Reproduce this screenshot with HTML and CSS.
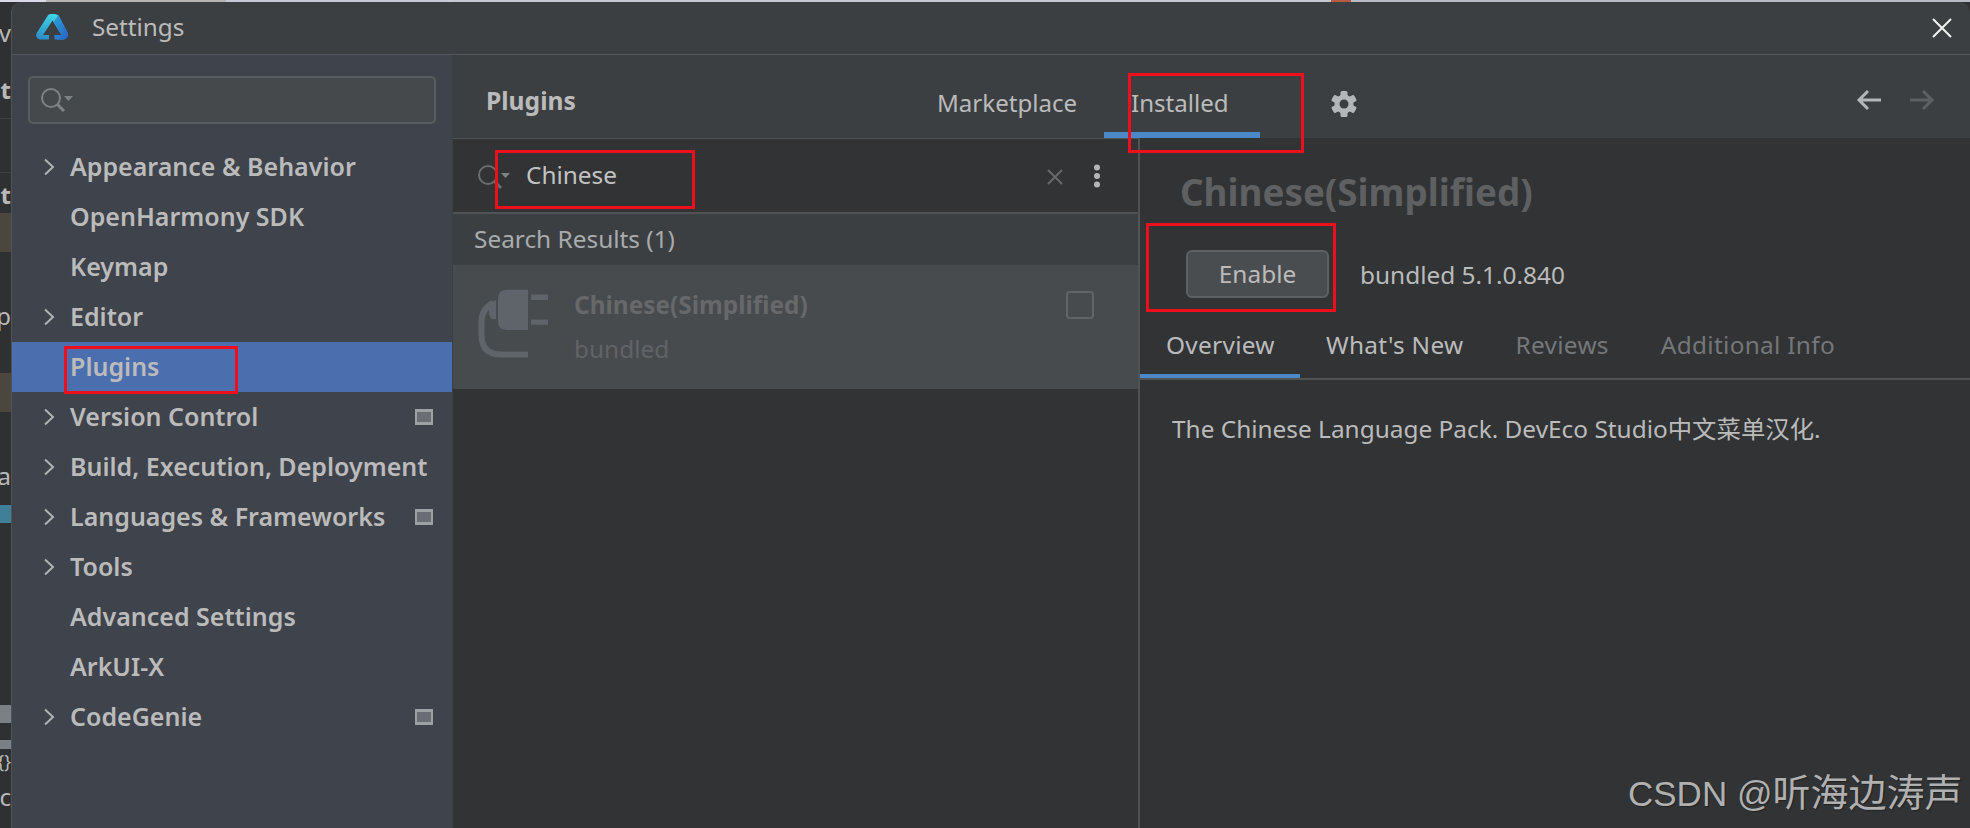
FILE: index.html
```html
<!DOCTYPE html>
<html lang="en">
<head>
<meta charset="utf-8">
<title>Settings</title>
<link rel="stylesheet" href="styles.css">
</head>
<body>
<div class="desktop-top"><span class="dt a"></span><span class="dt b"></span><span class="dt c"></span><span class="dt d"></span><span class="dt e"></span><span class="dt f"></span></div>
<div class="stage">
  <div class="behind">
    <div class="frag s16"></div>
    <div class="frag t">ev</div>
    <div class="frag s27"></div>
    <div class="frag t strong">nt</div>
    <div class="frag s13"></div>
    <div class="frag lined"></div>
    <div class="frag s7"></div>
    <div class="frag t strong">nt</div>
    <div class="frag s3"></div>
    <div class="frag brown"></div>
    <div class="frag s49"></div>
    <div class="frag t">p</div>
    <div class="frag s42"></div>
    <div class="frag brown"></div>
    <div class="frag s49"></div>
    <div class="frag t">na</div>
    <div class="frag s14"></div>
    <div class="frag teal"></div>
    <div class="frag s182"></div>
    <div class="frag grey"></div>
    <div class="frag s17"></div>
    <div class="frag grey2"></div>
    <div class="frag t small">{}</div>
    <div class="frag s9"></div>
    <div class="frag t">nc</div>
  </div>
  <div class="window">
    <header class="titlebar">
      <svg class="logo" viewBox="0 0 32 26" aria-hidden="true">
        <defs>
          <linearGradient id="lg1" x1="0.55" y1="0" x2="0.3" y2="1"><stop offset="0" stop-color="#3fd6e6"/><stop offset="1" stop-color="#2a8fc8"/></linearGradient>
          <linearGradient id="lg2" x1="0" y1="0" x2="1" y2="1"><stop offset="0" stop-color="#2aa6d8"/><stop offset="1" stop-color="#2b5fc8"/></linearGradient>
        </defs>
        <path d="M12 1.2Q13 0 15 0H19Q21 0 22 1.600L31.200 18Q32.600 20.800 31 23.600Q29.600 25.600 27.500 25.600H21L19.500 21H25.500L16.500 6.500L7 21H13V25.600H4.500Q2 25.600 .8 23.600Q-.6 21 1 18.400Z" fill="url(#lg1)"/>
        <path d="M22.500 0.800L31.200 18Q32.600 20.800 31 23.600Q29.600 25.600 27.500 25.600H18.500V21H25.500L17.500 8Z" fill="url(#lg2)"/>
        <path d="M16 13.500L20.500 19H17.600V25.600H14.400V19H11.500Z" fill="#3c3f41"/>
      </svg>
      <span class="title">Settings</span>
      <svg class="close" viewBox="0 0 20 20" aria-hidden="true"><path d="M1 1L19 19M19 1L1 19" stroke="#f2f2f2" stroke-width="2" fill="none"/></svg>
    </header>
    <div class="content">
      <aside class="sidebar">
        <div class="side-search">
          <svg class="search-ico" viewBox="0 0 34 26" aria-hidden="true"><circle cx="11" cy="11" r="9" fill="none" stroke="#7d8285" stroke-width="2"/><path d="M17 17L24 24" stroke="#7d8285" stroke-width="3"/><path d="M24 9H33L28.500 14Z" fill="#7d8285"/></svg>
        </div>
        <nav class="nav">
          <div class="nav-row"><svg class="chev" viewBox="0 0 12 18"><path d="M2 1.500L10 9L2 16.500" /></svg><span>Appearance &amp; Behavior</span></div>
          <div class="nav-row"><i class="chev-space"></i><span>OpenHarmony SDK</span></div>
          <div class="nav-row"><i class="chev-space"></i><span>Keymap</span></div>
          <div class="nav-row"><svg class="chev" viewBox="0 0 12 18"><path d="M2 1.500L10 9L2 16.500" /></svg><span>Editor</span></div>
          <div class="nav-row selected"><i class="chev-space"></i><span>Plugins</span></div>
          <div class="nav-row"><svg class="chev" viewBox="0 0 12 18"><path d="M2 1.500L10 9L2 16.500" /></svg><span>Version Control</span><i class="badge"></i></div>
          <div class="nav-row"><svg class="chev" viewBox="0 0 12 18"><path d="M2 1.500L10 9L2 16.500" /></svg><span>Build, Execution, Deployment</span></div>
          <div class="nav-row"><svg class="chev" viewBox="0 0 12 18"><path d="M2 1.500L10 9L2 16.500" /></svg><span>Languages &amp; Frameworks</span><i class="badge"></i></div>
          <div class="nav-row"><svg class="chev" viewBox="0 0 12 18"><path d="M2 1.500L10 9L2 16.500" /></svg><span>Tools</span></div>
          <div class="nav-row"><i class="chev-space"></i><span>Advanced Settings</span></div>
          <div class="nav-row"><i class="chev-space"></i><span>ArkUI-X</span></div>
          <div class="nav-row"><svg class="chev" viewBox="0 0 12 18"><path d="M2 1.500L10 9L2 16.500" /></svg><span>CodeGenie</span><i class="badge"></i></div>
        </nav>
      </aside>
      <main class="main">
        <div class="main-head">
          <div class="head-left"><b class="plugins-title">Plugins</b></div>
          <div class="tabs">
            <span class="tab">Marketplace</span>
            <span class="tab on">Installed</span>
          </div>
          <svg class="gear" viewBox="0 0 28 28" aria-hidden="true">
            <g fill="#b4b7b9"><rect x="10.500" y="1" width="7" height="26" rx="1.500"/><rect x="10.500" y="1" width="7" height="26" rx="1.500" transform="rotate(60 14 14)"/><rect x="10.500" y="1" width="7" height="26" rx="1.500" transform="rotate(120 14 14)"/></g>
            <circle cx="14" cy="14" r="7" fill="none" stroke="#b4b7b9" stroke-width="5"/>
            <circle cx="14" cy="14" r="4.500" fill="#3c3f41"/>
          </svg>
          <svg class="arrow back" viewBox="0 0 26 22" aria-hidden="true"><path d="M25 11H3M12 2L3 11L12 20" fill="none" stroke="#b4b7b9" stroke-width="3"/></svg>
          <svg class="arrow fwd" viewBox="0 0 26 22" aria-hidden="true"><path d="M1 11H23M14 2L23 11L14 20" fill="none" stroke="#5d6062" stroke-width="3"/></svg>
        </div>
        <div class="panes">
          <section class="list">
            <div class="list-search">
              <svg class="search-ico dim" viewBox="0 0 34 26" aria-hidden="true"><circle cx="11" cy="11" r="9" fill="none" stroke="#6a6d70" stroke-width="2"/><path d="M17 17L24 24" stroke="#6a6d70" stroke-width="3"/><path d="M24 9H33L28.500 14Z" fill="#7d8285"/></svg>
              <span class="query">Chinese</span>
              <svg class="clear" viewBox="0 0 16 16" aria-hidden="true"><path d="M1 1L15 15M15 1L1 15" stroke="#66696b" stroke-width="2" fill="none"/></svg>
              <svg class="dots" viewBox="0 0 8 24" aria-hidden="true"><circle cx="4" cy="3.500" r="3" fill="#b4b7b9"/><circle cx="4" cy="12" r="3" fill="#b4b7b9"/><circle cx="4" cy="20.500" r="3" fill="#b4b7b9"/></svg>
            </div>
            <div class="results">Search Results (1)</div>
            <div class="plugin">
              <svg class="plug" viewBox="0 0 70 71" aria-hidden="true">
                <path d="M29 0.700H50V41H29Q20 41 20 32V10Q20 0.700 29 0.700Z" fill="#5e6469"/>
                <path d="M53 5.500H70V11H53ZM53 30.400H70V35.800H53Z" fill="#5e6469"/>
                <path d="M18 11V30H14Q11 28 11 24V17Q11 13 18 11Z" fill="#5e6469"/>
                <path d="M15 14Q3.500 20 3.500 33V46Q3.500 65.500 23 65.500H50" fill="none" stroke="#5e6469" stroke-width="6"/>
              </svg>
              <div class="plugin-text">
                <b class="plugin-name">Chinese(Simplified)</b>
                <span class="plugin-sub">bundled</span>
              </div>
              <i class="check"></i>
            </div>
          </section>
          <section class="detail">
            <h1 class="detail-title">Chinese(Simplified)</h1>
            <div class="detail-actions">
              <span class="btn">Enable</span>
              <span class="version">bundled 5.1.0.840</span>
            </div>
            <div class="detail-tabs">
              <span class="dtab on">Overview</span>
              <span class="dtab lit">What's New</span>
              <span class="dtab">Reviews</span>
              <span class="dtab">Additional Info</span>
            </div>
            <p class="desc">The Chinese Language Pack. DevEco Studio中文菜单汉化.</p>
          </section>
        </div>
      </main>
    </div>
  </div>
</div>
<div class="mark box-installed"></div>
<div class="mark box-search"></div>
<div class="mark box-enable"></div>
<div class="mark box-plugins"></div>
<div class="watermark"><span class="wm-latin">CSDN @</span>听海边涛声</div>
</body>
</html>
```

FILE: styles.css
```css
* { box-sizing: border-box; }
html, body { margin: 0; height: 100%; }
body {
  width: 1970px;
  height: 828px;
  overflow: hidden;
  position: relative;
  background: #2f3032;
  font-family: "Noto Sans", "Noto Sans CJK SC", sans-serif;
  color: #bbbbbb;
  display: flex;
  flex-direction: column;
}
.desktop-top { height: 2px; display: flex; flex: none; }
.dt { display: block; height: 2px; }
.dt.a { width: 46px; background: #d8d8e8; }
.dt.b { width: 180px; background: #b4b4b4; }
.dt.c { width: 225px; background: #c8cad8; }
.dt.d { width: 880px; background: #c6c8d4; }
.dt.e { width: 20px; background: #b85a40; }
.dt.f { flex: 1; background: #b8bac6; }

.stage { flex: 1; display: flex; min-height: 0; }
.behind { width: 11px; flex: none; overflow: hidden; display: flex; flex-direction: column; background: #2f3032; }
.frag { flex: none; white-space: nowrap; direction: rtl; overflow: hidden; width: 11px; }
.t { height: 30px; font-size: 24px; line-height: 30px; color: #b9b9b9; }
.strong { font-weight: 700; }
.t.small { height: 24px; font-size: 18px; line-height: 24px; }
.lined { height: 55px; border-top: 1px solid #3f4143; border-bottom: 1px solid #3f4143; }
.brown { height: 39px; background: #4b463e; }
.teal { height: 18px; background: #3f7f98; }
.grey { height: 18px; background: #7b8085; }
.grey2 { height: 9px; background: #7b8085; }
.s3 { height: 3px; } .s7 { height: 7px; } .s9 { height: 9px; } .s13 { height: 13px; }
.s14 { height: 14px; } .s16 { height: 16px; } .s17 { height: 17px; } .s27 { height: 27px; }
.s42 { height: 42px; } .s49 { height: 49px; } .s182 { height: 182px; }

.window { flex: 1; min-width: 0; display: flex; flex-direction: column; background: #3c3f41; border-radius: 10px 10px 0 0; border-left: 1px solid #515456; overflow: hidden; }

.titlebar { height: 53px; flex: none; display: flex; align-items: center; border-bottom: 1px solid #55585a; padding: 0 18px 0 24px; }
.logo { width: 32px; height: 26px; flex: none; margin-top: -2px; }
.title { margin-left: 24px; font-size: 24.300px; color: #bbbbbb; margin-top: -3px; }
.close { width: 20px; height: 20px; margin-left: auto; margin-top: -1px; }

.content { flex: 1; display: flex; min-height: 0; }

.sidebar { width: 440px; flex: none; background: #3f434b; padding: 21px 0 0; }
.side-search { height: 48px; margin: 0 16px 0 16px; background: #46494b; border: 2px solid #5a5d60; border-radius: 5px; display: flex; align-items: center; padding-left: 10px; }
.search-ico { width: 34px; height: 26px; flex: none; }
.nav { margin-top: 18px; }
.nav-row { height: 50px; display: flex; align-items: center; padding-left: 31px; padding-right: 19px; font-size: 25px; line-height: 32px; font-weight: 600; color: #bbbbbb; white-space: nowrap; }
.nav-row.selected { background: #4b6eaf; }
.chev { width: 12px; height: 18px; flex: none; }
.chev path { fill: none; stroke: #b0b3b5; stroke-width: 2; }
.chev-space { width: 12px; flex: none; }
.nav-row span { margin: -2px 0 0 15px; }
.badge { width: 18px; height: 16px; margin-left: auto; border: 3px solid #9ea1a4; border-width: 3px 2px; background: #6a6e74; }

.main { flex: 1; min-width: 0; display: flex; flex-direction: column; padding-left: 1px; }
.main-head { height: 83px; flex: none; display: flex; align-items: stretch; }
.head-left { width: 458px; flex: none; padding: 30px 0 0 33px; }
.plugins-title { font-size: 24.600px; font-weight: 700; line-height: 32px; display: block; }
.tabs { display: flex; align-items: stretch; }
.tab { width: 193px; font-size: 24.100px; padding: 31px 0 0 26px; line-height: 34px; color: #bbbbbb; }
.tab.on { width: 156px; border-bottom: 6px solid #4a88c7; padding-left: 27px; }
.gear { width: 28px; height: 28px; margin: 35px 0 0 70px; flex: none; }
.arrow { width: 26px; height: 22px; margin-top: 34px; flex: none; }
.arrow.back { margin-left: 498px; }
.arrow.fwd { margin-left: 27px; }

.panes { flex: 1; display: flex; min-height: 0; background: #313335; }
.list { width: 685px; flex: none; border-top: 1px solid #505355; }
.list-search { height: 75px; display: flex; align-items: center; border-bottom: 2px solid #505355; padding: 0 37px 0 24px; }
.search-ico.dim { margin-top: 2px; }
.query { margin: -2px 0 0 15px; font-size: 24.400px; color: #c3c3c3; }
.clear { width: 16px; height: 16px; margin-left: auto; margin-top: 2px; }
.dots { width: 8px; height: 24px; margin-left: 30px; }
.results { height: 51px; background: #3c3f41; line-height: 49px; padding-left: 21px; font-size: 24.400px; color: #a9abad; }
.plugin { height: 124px; background: #484b4e; display: flex; padding: 24px 44px 0 25px; }
.plug { width: 70px; height: 71px; flex: none; }
.plugin-text { margin: -1px 0 0 26px; display: flex; flex-direction: column; }
.plugin-name { font-size: 24.400px; font-weight: 700; color: #66686a; line-height: 34px; }
.plugin-sub { font-size: 24.400px; color: #616366; line-height: 34px; margin-top: 10px; }
.check { width: 28px; height: 28px; border: 2px solid #626567; border-radius: 4px; margin-left: auto; margin-top: 2px; }

.detail { flex: 1; border-left: 2px solid #505355; min-width: 0; }
.detail-title { margin: 0; padding: 29px 0 0 40px; height: 100px; font-size: 36.800px; line-height: 50px; font-weight: 700; color: #5f6061; }
.detail-actions { display: flex; align-items: center; height: 72px; padding: 0 0 0 46px; margin-bottom: 8px; }
.btn { width: 143px; height: 48px; background: #4a4d50; border: 2px solid #5e6163; border-radius: 6px; font-size: 24.400px; line-height: 44px; text-align: center; color: #bbbbbb; }
.version { margin-left: 31px; font-size: 24.400px; color: #bbbbbb; }
.detail-tabs { display: flex; height: 62px; border-bottom: 2px solid #505355; align-items: stretch; }
.dtab { font-size: 24.400px; line-height: 54px; padding: 0 26px; color: #75777a; letter-spacing: 0.3px; }
.dtab.on { color: #bbbbbb; border-bottom: 4px solid #4a88c7; width: 160px; }
.dtab.lit { color: #bbbbbb; }
.desc { margin: 32px 0 0 32px; font-size: 24.400px; line-height: 34px; color: #bbbbbb; }

.mark { position: absolute; border: 3px solid #ef0f1c; pointer-events: none; }
.box-installed { left: 1128px; top: 73px; width: 176px; height: 80px; }
.box-search { left: 495px; top: 150px; width: 200px; height: 59px; }
.box-enable { left: 1146px; top: 223px; width: 190px; height: 89px; }
.box-plugins { left: 64px; top: 346px; width: 174px; height: 48px; }
.watermark { position: absolute; left: 1628px; top: 769px; font-family: "Liberation Sans", "Noto Sans CJK SC", sans-serif; font-size: 38px; line-height: 48px; color: #b0b0b0; text-shadow: 1px 1px 1px #222; white-space: nowrap; }
.wm-latin { font-size: 35px; }
```
